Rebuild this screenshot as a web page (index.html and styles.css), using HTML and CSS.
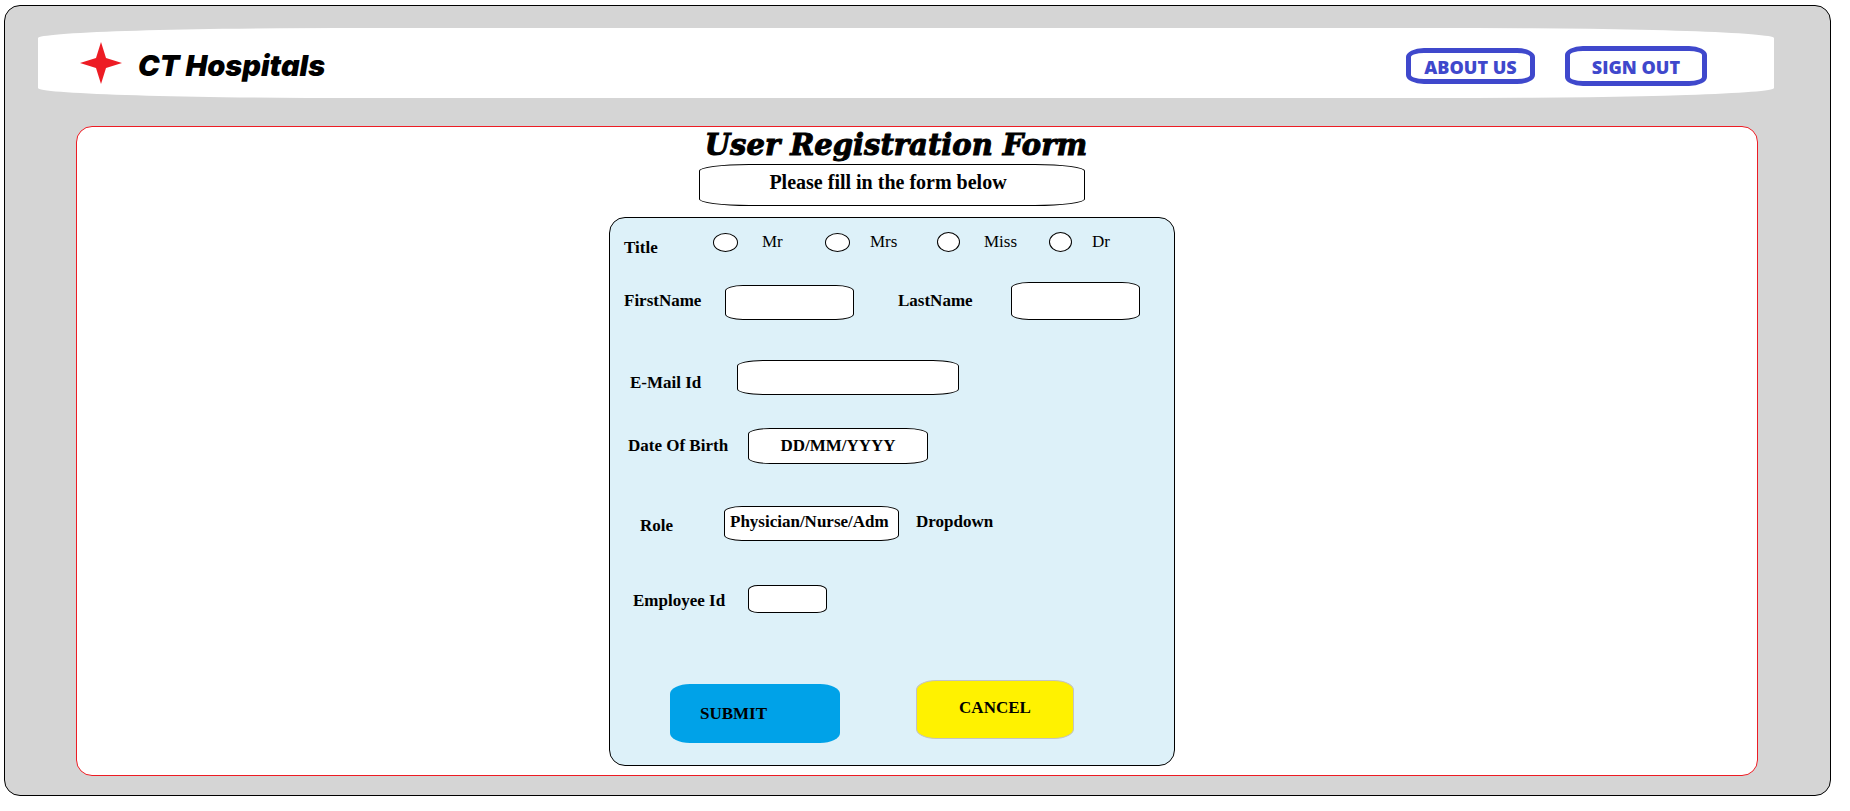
FILE: index.html
```html
<!DOCTYPE html>
<html lang="en">
<head>
<meta charset="utf-8">
<title>CT Hospitals - User Registration</title>
<link rel="stylesheet" href="styles.css">
</head>
<body>
<div class="frame">
  <header class="header">
    <div class="brand">
      <svg class="brand-logo" viewBox="0 0 42 42" aria-hidden="true"><path d="M21 0L26 16L42 21L26 26L21 42L16 26L0 21L16 16Z"/></svg>
      <span class="brand-name">CT Hospitals</span>
    </div>
    <nav class="nav">
      <button type="button" class="nav-button">ABOUT US</button>
      <button type="button" class="nav-button nav-button-large">SIGN OUT</button>
    </nav>
  </header>
  <main class="panel">
    <h1 class="heading">User Registration Form</h1>
    <p class="banner">Please fill in the form below</p>
    <form class="card">
      <div class="row row-title" role="radiogroup" aria-labelledby="title-label">
        <span class="label" id="title-label">Title</span>
        <div class="options">
          <label class="option option-wide"><input class="radio" type="radio" name="title" value="mr">Mr</label>
          <label class="option"><input class="radio" type="radio" name="title" value="mrs">Mrs</label>
          <label class="option option-wide"><input class="radio radio-round" type="radio" name="title" value="miss">Miss</label>
          <label class="option"><input class="radio radio-round" type="radio" name="title" value="dr">Dr</label>
        </div>
      </div>
      <div class="row row-names">
        <label class="label" for="first-name">FirstName</label>
        <input class="field field-name" id="first-name" type="text">
        <label class="label" for="last-name">LastName</label>
        <input class="field field-name field-tall" id="last-name" type="text">
      </div>
      <div class="row row-email">
        <label class="label" for="email">E-Mail Id</label>
        <input class="field field-email" id="email" type="email">
      </div>
      <div class="row row-birth">
        <label class="label" for="birth">Date Of Birth</label>
        <input class="field field-birth" id="birth" type="text" placeholder="DD/MM/YYYY">
      </div>
      <div class="row row-role">
        <label class="label" for="role">Role</label>
        <select class="field field-role" id="role"><option>Physician/Nurse/Adm</option></select>
        <span class="hint">Dropdown</span>
      </div>
      <div class="row row-employee">
        <label class="label" for="employee">Employee Id</label>
        <input class="field field-employee" id="employee" type="text">
      </div>
      <div class="actions">
        <button type="submit" class="action action-submit">SUBMIT</button>
        <button type="button" class="action action-cancel">CANCEL</button>
      </div>
    </form>
  </main>
</div>
</body>
</html>
```
FILE: styles.css
```css
* { box-sizing: border-box; }

body {
  margin: 0;
  padding: 5px 19px 15px 4px;
  background: #fff;
  color: #000;
  font: 17px/20px "Liberation Serif", "Times New Roman", serif;
}

button, input, select { font: inherit; color: inherit; }

.frame {
  padding: 22px 56px 19px 33px;
  background: #d5d5d5;
  border: 1px solid #000;
  border-radius: 16px;
}

.header {
  display: flex;
  justify-content: space-between;
  align-items: center;
  min-height: 70px;
  padding: 0 67px 0 42px;
  background: #fff;
  border-radius: 300px / 10px;
}

.brand { display: flex; align-items: center; gap: 16px; }
.brand-logo { width: 42px; height: 42px; fill: #ed1c24; }
.brand-name { padding-top: 5px; font: italic 900 29px/32px Inter, sans-serif; }

.nav { display: flex; align-items: center; gap: 30px; padding-top: 6px; }
.nav-button {
  width: 129px;
  height: 36px;
  padding: 2px 0 0;
  background: #fff;
  border: 5px solid #3f48cc;
  border-radius: 18px / 9px;
  color: #3f48cc;
  font: 800 18px/20px "Open Sans", sans-serif;
}
.nav-button-large { width: 142px; height: 40px; }

.panel {
  display: flex;
  flex-direction: column;
  align-items: center;
  margin: 28px 16px 0 38px;
  padding: 0 50px 9px 0;
  background: #fff;
  border: 1px solid #ed1c24;
  border-radius: 16px;
}

.heading {
  margin: 0;
  padding-left: 8px;
  font: italic 900 29px/37px "DejaVu Serif", serif;
  -webkit-text-stroke: 1px #000;
}

.banner {
  width: 100%;
  max-width: 386px;
  margin: 0 0 11px;
  padding: 7px 16px 13px 8px;
  border: 1px solid #000;
  border-radius: 50px / 7px;
  text-align: center;
  font-weight: bold;
  font-size: 20px;
}

.card {
  width: 100%;
  max-width: 566px;
  padding: 14px 14px 22px;
  background: #ddf1f9;
  border: 1px solid #000;
  border-radius: 16px;
}

.row { display: flex; align-items: center; }
.label, .hint { font-weight: bold; }
.label { flex: none; }

.row-title { align-items: flex-end; }
.row-title .label { width: 89px; }
.options {
  flex: 1;
  display: grid;
  grid-template-columns: repeat(4, 112px);
  padding-bottom: 6px;
}
.option { display: flex; align-items: center; gap: 20px; }
.option-wide { gap: 24px; }
.radio {
  appearance: none;
  width: 25px;
  height: 19px;
  margin: 0;
  background: #fff;
  border: 1px solid #000;
  border-radius: 50%;
}
.radio-round { width: 23px; height: 20px; }
.radio:checked { background: #000; }

.field {
  appearance: none;
  height: 35px;
  margin: 0;
  padding: 0 5px;
  background: #fff;
  border: 1px solid #000;
  border-radius: 18px / 6px;
  font-weight: bold;
}
.field::placeholder { color: #000; opacity: 1; text-align: center; }

.row-names { align-items: flex-end; margin-top: 24px; }
.row-names .label { width: 101px; padding-bottom: 9px; }
.row-names .field + .label { width: 113px; margin-left: 44px; }
.field-name { width: 129px; }
.field-tall { height: 38px; }

.row-email { align-items: flex-end; margin-top: 40px; padding-left: 6px; }
.row-email .label { width: 107px; padding-bottom: 2px; }
.field-email { width: 222px; border-radius: 26px / 6px; }

.row-birth { margin-top: 33px; padding-left: 4px; }
.row-birth .label { width: 120px; }
.field-birth { width: 180px; height: 36px; border-radius: 22px / 6px; }

.row-role { margin-top: 42px; padding-left: 16px; }
.row-role .label { width: 84px; padding-top: 4px; }
.field-role { width: 175px; padding-bottom: 3px; }
.hint { margin-left: 17px; padding-bottom: 4px; }

.row-employee { align-items: flex-end; margin-top: 44px; padding-left: 9px; }
.row-employee .label { width: 115px; padding-bottom: 2px; }
.field-employee { width: 79px; height: 28px; border-radius: 10px / 5px; }

.actions {
  display: flex;
  justify-content: space-between;
  margin-top: 67px;
  padding: 0 86px 0 46px;
}
.action {
  height: 59px;
  border: 0;
  border-radius: 20px / 10px;
  font-weight: bold;
}
.action-submit {
  width: 170px;
  margin-top: 4px;
  padding: 0 30px;
  background: #00a2e8;
  text-align: left;
}
.action-cancel {
  width: 158px;
  padding: 0 0 4px;
  background: #fff200;
  border: 1px solid #c3c3c3;
}
```
